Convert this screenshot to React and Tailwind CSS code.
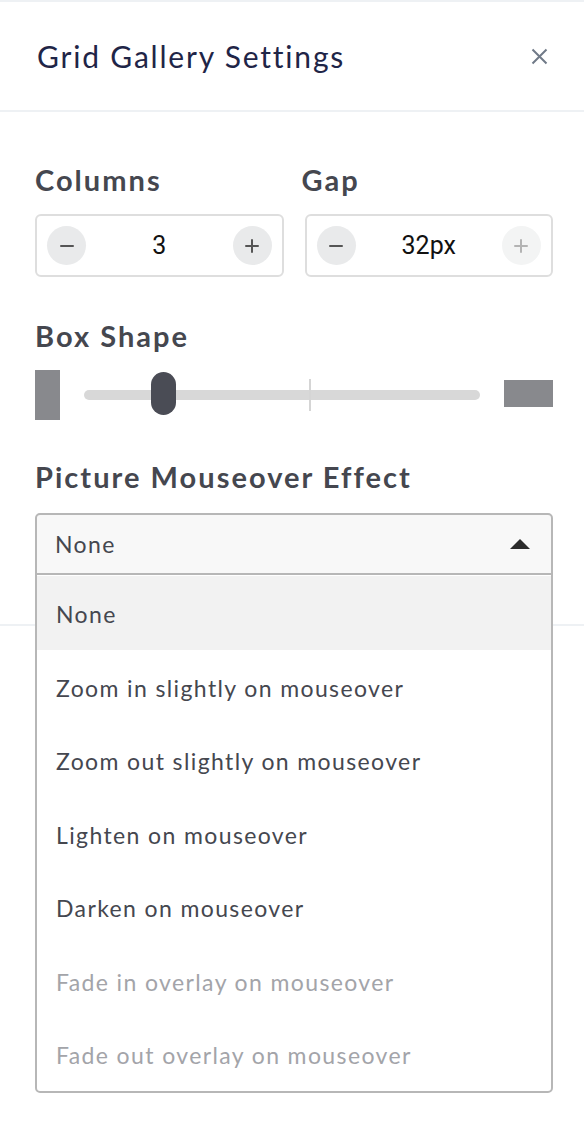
import React, { useState } from 'react';

const OPTIONS = [
  { label: 'None', disabled: false },
  { label: 'Zoom in slightly on mouseover', disabled: false },
  { label: 'Zoom out slightly on mouseover', disabled: false },
  { label: 'Lighten on mouseover', disabled: false },
  { label: 'Darken on mouseover', disabled: false },
  { label: 'Fade in overlay on mouseover', disabled: true },
  { label: 'Fade out overlay on mouseover', disabled: true },
];

const MinusIcon = ({ className }) => (
  <svg width="16" height="16" viewBox="0 0 16 16" className={className}>
    <path d="M2 8h12" stroke="currentColor" strokeWidth="2" strokeLinecap="round" />
  </svg>
);

const PlusIcon = ({ className }) => (
  <svg width="16" height="16" viewBox="0 0 16 16" className={className}>
    <path d="M2 8h12M8 2v12" stroke="currentColor" strokeWidth="2" strokeLinecap="round" />
  </svg>
);

const Stepper = ({ value, plusDisabled }) => (
  <div className="flex h-[63px] items-center justify-between rounded-[6px] border-2 border-[#dedede] px-[10px]">
    <button className="flex h-[39px] w-[39px] items-center justify-center rounded-full bg-[#e9eaeb] text-[#555]">
      <MinusIcon />
    </button>
    <span className="font-['Roboto',sans-serif] text-[25px] text-[#111]">{value}</span>
    <button
      className={
        plusDisabled
          ? 'flex h-[39px] w-[39px] items-center justify-center rounded-full bg-[#f3f4f4] text-[#b3b3b3]'
          : 'flex h-[39px] w-[39px] items-center justify-center rounded-full bg-[#e9eaeb] text-[#555]'
      }
    >
      <PlusIcon />
    </button>
  </div>
);

export default function App() {
  const [effect] = useState('None');

  return (
    <div className="min-h-[1122px] w-[584px] bg-white font-['Lato',sans-serif]">
      <div className="h-[2px] bg-[#eef1f4]" />

      {/* header */}
      <div className="flex h-[110px] items-center justify-between border-b-2 border-[#eef1f4] pl-[37px] pr-[36px]">
        <h1 className="text-[30px] leading-none tracking-[0.06em] text-[#1f2547]">Grid Gallery Settings</h1>
        <button className="text-[#707a88]">
          <svg width="17" height="17" viewBox="0 0 17 17">
            <path d="M1.5 1.5l14 14M15.5 1.5l-14 14" stroke="currentColor" strokeWidth="2" />
          </svg>
        </button>
      </div>

      {/* settings */}
      <div className="relative border-b-2 border-[#eef1f4] pl-[35px] pr-[31px] pt-[53px] pb-[49px]">
        <div className="grid grid-cols-2 gap-[21px]">
          <div>
            <h2 className="mb-[20px] text-[29px] font-bold leading-none tracking-[0.07em] text-[#45474f]">Columns</h2>
            <Stepper value="3" />
          </div>
          <div>
            <h2 className="mb-[20px] -ml-[3px] text-[29px] font-bold leading-none tracking-[0.07em] text-[#45474f]">Gap</h2>
            <Stepper value="32px" plusDisabled />
          </div>
        </div>

        <h2 className="mt-[44px] text-[29px] font-bold leading-none tracking-[0.07em] text-[#45474f]">Box Shape</h2>
        <div className="mt-[20px] flex h-[50px] items-center">
          <div className="h-[50px] w-[25px] bg-[#88898d]" />
          <div className="relative ml-[24px] mr-[24px] h-[10px] flex-1 rounded-full bg-[#d8d8d8]">
            <div className="absolute left-[225px] top-[-11px] h-[32px] w-[2px] bg-[#d5d5d5]" />
            <div className="absolute left-[67px] top-[-18px] h-[43px] w-[25px] rounded-full bg-[#4a4c55]" />
          </div>
          <div className="mb-[3px] h-[27px] w-[49px] bg-[#88898d]" />
        </div>

        <h2 className="mt-[42px] text-[29px] font-bold leading-none tracking-[0.07em] text-[#45474f]">Picture Mouseover Effect</h2>
        <div className="relative mt-[22px]">
          <div className="flex h-[62px] items-center justify-between rounded-t-[5px] border-2 border-[#b7b7b7] bg-[#f8f8f8] pl-[18px] pr-[21px]">
            <span className="text-[23px] tracking-[0.06em] text-[#45474f]">{effect}</span>
            <svg width="20" height="10" viewBox="0 0 20 10">
              <path d="M10 0L20 10H0z" fill="#2b2b2b" />
            </svg>
          </div>
          <ul className="absolute left-0 right-0 top-[60px] z-10 rounded-b-[5px] border-2 border-[#b7b7b7] bg-white pt-[1px]">
            {OPTIONS.map((o) => (
              <li
                key={o.label}
                className={
                  o.label === effect
                    ? 'flex h-[73.5px] items-center bg-[#f2f2f2] pl-[19px] pt-[3px] text-[23px] tracking-[0.06em] text-[#45474f]'
                    : o.disabled
                    ? 'flex h-[73.5px] items-center pl-[19px] pt-[3px] text-[23px] tracking-[0.06em] text-[#a3a4a9]'
                    : 'flex h-[73.5px] items-center pl-[19px] pt-[3px] text-[23px] tracking-[0.06em] text-[#45474f]'
                }
              >
                {o.label}
              </li>
            ))}
          </ul>
        </div>
      </div>
    </div>
  );
}
